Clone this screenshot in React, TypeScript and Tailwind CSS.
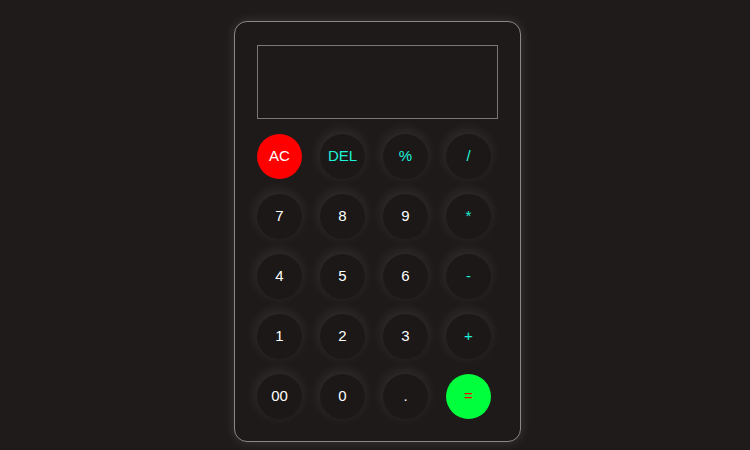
const keys: { label: string; kind: 'num' | 'op' | 'clear' | 'equal' }[] = [
  { label: 'AC', kind: 'clear' },
  { label: 'DEL', kind: 'op' },
  { label: '%', kind: 'op' },
  { label: '/', kind: 'op' },
  { label: '7', kind: 'num' },
  { label: '8', kind: 'num' },
  { label: '9', kind: 'num' },
  { label: '*', kind: 'op' },
  { label: '4', kind: 'num' },
  { label: '5', kind: 'num' },
  { label: '6', kind: 'num' },
  { label: '-', kind: 'op' },
  { label: '1', kind: 'num' },
  { label: '2', kind: 'num' },
  { label: '3', kind: 'num' },
  { label: '+', kind: 'op' },
  { label: '00', kind: 'num' },
  { label: '0', kind: 'num' },
  { label: '.', kind: 'num' },
  { label: '=', kind: 'equal' },
];

const keyStyle = (kind: string) => {
  switch (kind) {
    case 'clear':
      return 'bg-[#ff0000] text-white';
    case 'equal':
      return 'bg-[#00ff3c] text-[#ff0000]';
    case 'op':
      return 'bg-[#1b1817] text-[#1ef2da] shadow-[-1px_-3px_14px_rgba(255,255,255,0.1)]';
    default:
      return 'bg-[#1b1817] text-white shadow-[-1px_-3px_14px_rgba(255,255,255,0.1)]';
  }
};

const App = () => {
  return (
    <div className="w-[750px] h-[450px] bg-[#1f1b1a] flex justify-start pl-[234px] pt-[21px] font-['Liberation_Sans',sans-serif]">
      <div className="w-[287px] h-[421px] rounded-[13px] border border-[#8a8787] bg-[#1e1a19] shadow-[0_0_12px_rgba(255,255,255,0.12)] px-[22px] pt-[23px]">
        <div className="h-[74px] border border-[#7a7776] bg-[#1e1a19]" />
        <div className="mt-[15px] grid grid-cols-[repeat(4,45px)] gap-x-[18px] gap-y-[15px]">
          {keys.map((key) => (
            <button
              key={key.label}
              className={`w-[45px] h-[45px] rounded-full flex items-center justify-center text-[15px] font-normal ${keyStyle(key.kind)}`}
            >
              {key.label}
            </button>
          ))}
        </div>
      </div>
    </div>
  );
};

export default App;
